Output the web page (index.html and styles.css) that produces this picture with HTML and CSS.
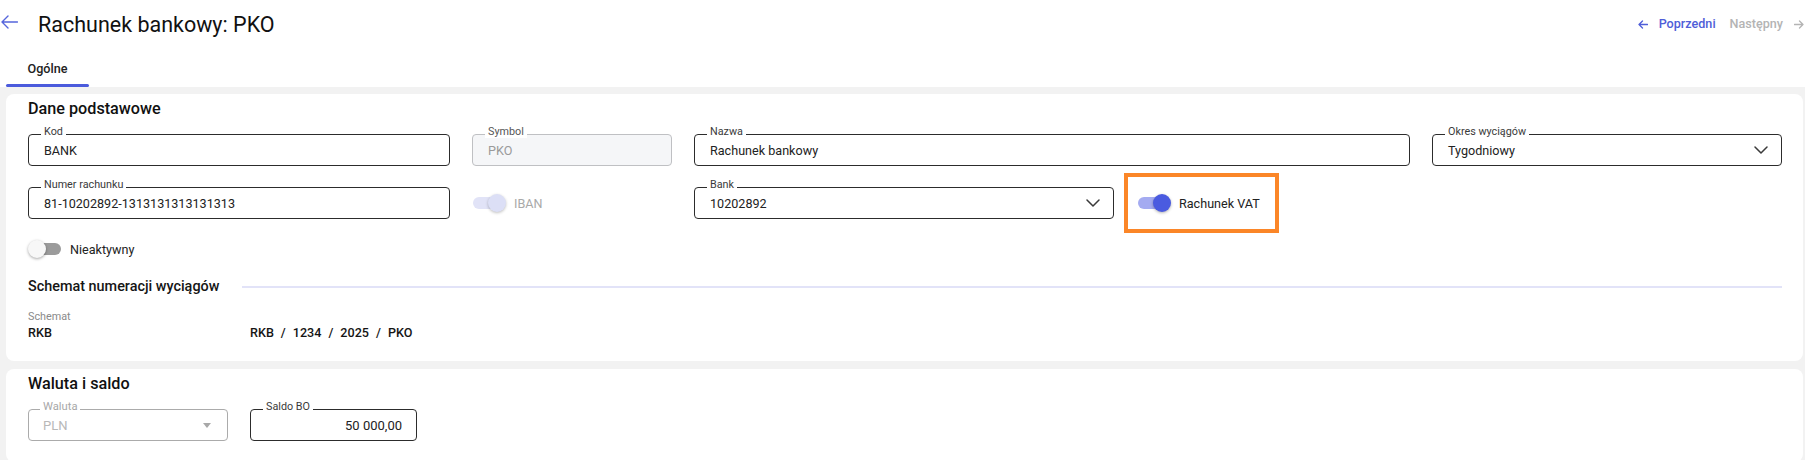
FILE: index.html
```html
<!DOCTYPE html>
<html lang="pl">
<head>
<meta charset="utf-8">
<title>Rachunek bankowy: PKO</title>
<link rel="stylesheet" href="styles.css">
</head>
<body>
<header class="topbar">
  <div class="title-wrap">
    <svg class="back" width="17" height="14" viewBox="0 0 17 14" aria-hidden="true"><path d="M16.5 7H1.2M7 1L1 7l6 6" fill="none" stroke="#5666dc" stroke-width="1.4" stroke-linecap="round" stroke-linejoin="round"/></svg>
    <h1 class="title">Rachunek bankowy: PKO</h1>
  </div>
  <nav class="pager">
    <a class="pager-link prev"><svg width="10" height="9" viewBox="0 0 10 9" aria-hidden="true"><path d="M9.5 4.5H1M4.5 1L1 4.5 4.5 8" fill="none" stroke="currentColor" stroke-width="1.3" stroke-linecap="round" stroke-linejoin="round"/></svg><span>Poprzedni</span></a>
    <a class="pager-link next"><span>Następny</span><svg width="10" height="9" viewBox="0 0 10 9" aria-hidden="true"><path d="M0.5 4.5H9M5.5 1L9 4.5 5.5 8" fill="none" stroke="currentColor" stroke-width="1.3" stroke-linecap="round" stroke-linejoin="round"/></svg></a>
  </nav>
</header>

<div class="tabs">
  <div class="tab active">Ogólne</div>
</div>

<main class="content">
  <section class="card">
    <h2 class="card-title">Dane podstawowe</h2>

    <div class="row row-main">
      <div class="field"><span class="field-label">Kod</span><span class="value">BANK</span></div>
      <div class="field readonly"><span class="field-label">Symbol</span><span class="value">PKO</span></div>
      <div class="field"><span class="field-label">Nazwa</span><span class="value">Rachunek bankowy</span></div>
      <div class="field select"><span class="field-label">Okres wyciągów</span><span class="value">Tygodniowy</span>
        <svg class="chevron" width="14" height="8" viewBox="0 0 14 8" aria-hidden="true"><path d="M1 1l6 6 6-6" fill="none" stroke="#3a3a3a" stroke-width="1.5" stroke-linecap="round" stroke-linejoin="round"/></svg></div>
    </div>

    <div class="row row-second">
      <div class="field"><span class="field-label">Numer rachunku</span><span class="value">81-10202892-1313131313131313</span></div>
      <label class="switch-line disabled"><span class="switch on"><span class="track"></span><span class="knob"></span></span><span class="switch-text">IBAN</span></label>
      <div class="field select"><span class="field-label">Bank</span><span class="value">10202892</span>
        <svg class="chevron" width="14" height="8" viewBox="0 0 14 8" aria-hidden="true"><path d="M1 1l6 6 6-6" fill="none" stroke="#3a3a3a" stroke-width="1.5" stroke-linecap="round" stroke-linejoin="round"/></svg></div>
      <label class="switch-line primary highlighted"><span class="switch on"><span class="track"></span><span class="knob"></span></span><span class="switch-text">Rachunek VAT</span></label>
    </div>

    <div class="row row-switch">
      <label class="switch-line"><span class="switch"><span class="track"></span><span class="knob"></span></span><span class="switch-text">Nieaktywny</span></label>
    </div>

    <div class="subhead">
      <h3 class="subhead-title">Schemat numeracji wyciągów</h3>
      <span class="rule"></span>
    </div>

    <div class="schema">
      <div class="schema-col">
        <div class="small-label">Schemat</div>
        <div class="strong">RKB</div>
      </div>
      <div class="schema-preview strong">
        <span>RKB</span><span>/</span><span>1234</span><span>/</span><span>2025</span><span>/</span><span>PKO</span>
      </div>
    </div>
  </section>

  <section class="card">
    <h2 class="card-title">Waluta i saldo</h2>
    <div class="row row-currency">
      <div class="field disabled-field select"><span class="field-label">Waluta</span><span class="value">PLN</span><span class="caret"></span></div>
      <div class="field number"><span class="field-label">Saldo BO</span><span class="value">50 000,00</span></div>
    </div>
  </section>
</main>
</body>
</html>
```

FILE: styles.css
```css
* { box-sizing: border-box; }

body {
  margin: 0;
  font-family: Roboto, "Liberation Sans", sans-serif;
  color: #1b1b1b;
  background: #fff;
  overflow: hidden;
}

/* ---------- top bar ---------- */
.topbar {
  height: 48px;
  display: flex;
  align-items: center;
  justify-content: space-between;
  padding: 0 1px 0 1px;
}
.title-wrap {
  display: flex;
  align-items: center;
  gap: 20px;
}
.back { display: block; margin-top: -4px; }
.title {
  margin: 0;
  font-size: 21.5px;
  font-weight: 400;
  color: #111;
  line-height: 25px;
}
.pager {
  display: flex;
  align-items: center;
  gap: 14px;
  margin-top: -1px;
}
.pager-link {
  display: flex;
  align-items: center;
  gap: 11px;
  font-size: 12.6px;
  font-weight: 500;
  text-decoration: none;
}
.pager-link svg { display: block; margin-top: 1px; }
.prev { color: #4f5ed8; }
.next { color: #b4b4b4; }

/* ---------- tabs ---------- */
.tabs {
  height: 39px;
  display: flex;
  padding-left: 6px;
}
.tab {
  width: 83px;
  display: flex;
  flex-direction: column;
  align-items: center;
  justify-content: space-between;
  padding-top: 13px;
  font-size: 12.6px;
  font-weight: 500;
  line-height: 15px;
  color: #222;
}
.tab.active::after {
  content: "";
  align-self: stretch;
  height: 3px;
  border-radius: 2px;
  background: #4b5bdc;
}

/* ---------- content ---------- */
.content {
  background: #f2f2f2;
  padding: 7px 2px 20px 6px;
  display: flex;
  flex-direction: column;
  gap: 8px;
  min-height: 400px;
}
.card {
  background: #fff;
  border-radius: 8px;
  padding: 5px 21px 21px 22px;
}
.card-title {
  margin: 0 0 16px;
  font-size: 16.2px;
  font-weight: 500;
  line-height: 19px;
  color: #111;
}

.row { display: grid; column-gap: 22px; }
.row-main {
  grid-template-columns: 422px 200px 716px 1fr;
  margin-bottom: 21px;
}
.row-second {
  grid-template-columns: 422px 200px 420px auto;
  align-items: center;
  margin-bottom: 20px;
}
.row-switch { margin-bottom: 19px; }
.row-currency {
  grid-template-columns: 200px 167px;
}

/* ---------- outlined field ---------- */
.field {
  position: relative;
  height: 32px;
  border: 1px solid #2c2c2c;
  border-radius: 4px;
  display: flex;
  align-items: center;
  padding: 0 15px;
  font-size: 12.6px;
  color: #222;
  background: #fff;
}
.field-label {
  position: absolute;
  top: -9px;
  left: 12px;
  padding: 0 3px;
  background: #fff;
  font-size: 10.8px;
  line-height: 12px;
  color: #3a3a3a;
  white-space: nowrap;
}
.value { white-space: nowrap; line-height: 15px; }
.chevron { margin-left: auto; margin-right: -2px; display: block; }

.field.readonly {
  background: #f5f6f8;
  border-color: #bfc0c3;
}
.field.readonly .field-label { color: #555; }
.field.readonly .value { color: #9a9a9a; }

.field.disabled-field { border-color: #ababab; padding-left: 14px; }
.field.disabled-field .field-label { color: #a8a8a8; left: 11px; font-size: 11.2px; }
.field.disabled-field .value { color: #b8b8b8; font-size: 13px; }
.caret {
  margin-left: auto;
  margin-right: 1px;
  width: 0;
  height: 0;
  border-left: 4.5px solid transparent;
  border-right: 4.5px solid transparent;
  border-top: 5px solid #a8a8a8;
}
.field.number { justify-content: flex-end; padding-right: 14px; }
.field.number .value { font-size: 13px; }

/* ---------- switches ---------- */
.switch-line {
  display: flex;
  align-items: center;
  gap: 8px;
  font-size: 12.6px;
  color: #222;
  height: 20px;
  justify-self: start;
}
.switch {
  position: relative;
  width: 34px;
  height: 20px;
  flex: none;
}
.track {
  position: absolute;
  left: 1px;
  top: 4px;
  width: 32px;
  height: 12px;
  border-radius: 6px;
  background: #9b9b9b;
}
.knob {
  position: absolute;
  left: 0;
  top: 1px;
  width: 18px;
  height: 18px;
  border-radius: 50%;
  background: #f7f7f7;
  box-shadow: 0 1px 3px rgba(0, 0, 0, 0.35);
}
.switch.on .knob { left: 16px; }

.switch-line.disabled .switch-text { color: #a9a9a9; }
.switch-line.disabled .track { background: #e1e3f7; }
.switch-line.disabled .knob { background: #dcdff6; box-shadow: 0 1px 3px rgba(0, 0, 0, 0.25); }

.switch-line.primary .track { background: #a4abf1; }
.switch-line.primary .knob { background: #4a5be0; box-shadow: 0 1px 3px rgba(0, 0, 0, 0.3); }

.highlighted { position: relative; margin-left: 1px; }
.highlighted::after {
  content: "";
  position: absolute;
  left: -13px;
  right: -19px;
  top: -20px;
  bottom: -20px;
  border: 4px solid #fb8628;
  pointer-events: none;
}

/* ---------- schema ---------- */
.subhead {
  display: flex;
  align-items: center;
  gap: 23px;
  margin-bottom: 15px;
}
.subhead-title {
  margin: 0;
  font-size: 14.4px;
  font-weight: 500;
  line-height: 17px;
  color: #151515;
  white-space: nowrap;
}
.rule {
  flex: 1;
  height: 2px;
  background: #e2e3f8;
}
.schema {
  display: grid;
  grid-template-columns: 200px 1fr;
  column-gap: 22px;
  align-items: end;
}
.small-label {
  font-size: 10.8px;
  line-height: 13px;
  color: #8a8a8a;
  margin-bottom: 2px;
}
.strong {
  font-size: 12.6px;
  font-weight: 500;
  line-height: 15px;
  color: #151515;
}
.schema-preview {
  display: flex;
  gap: 7px;
}
```
